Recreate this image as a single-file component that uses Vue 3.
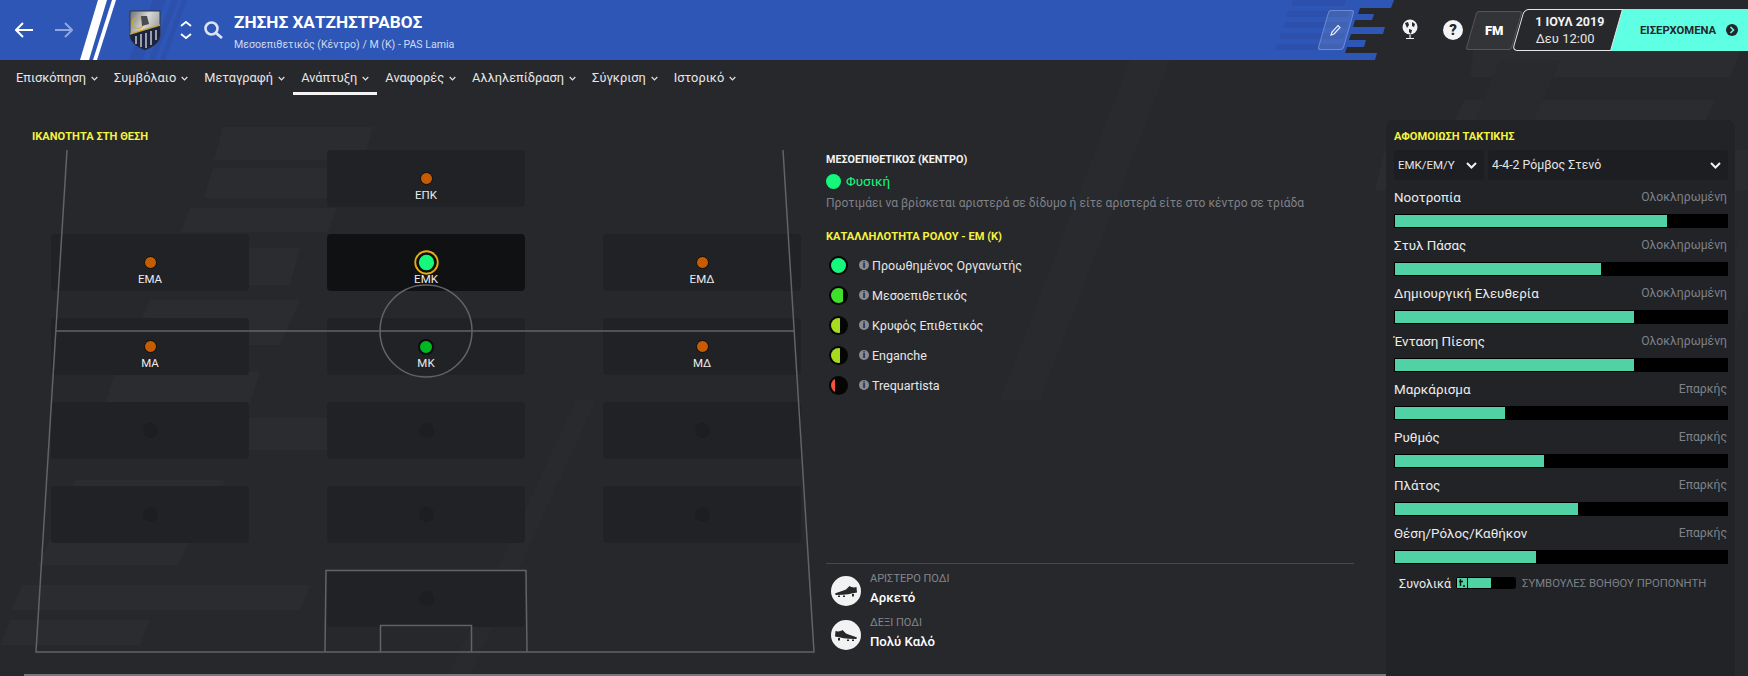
<script setup>
const tabs = ['Επισκόπηση', 'Συμβόλαιο', 'Μεταγραφή', 'Ανάπτυξη', 'Αναφορές', 'Αλληλεπίδραση', 'Σύγκριση', 'Ιστορικό']
const cells = [
  {}, { label: 'ΕΠΚ', kind: 'orange' }, {},
  { label: 'ΕΜΑ', kind: 'orange' }, { label: 'ΕΜΚ', kind: 'active' }, { label: 'ΕΜΔ', kind: 'orange' },
  { label: 'ΜΑ', kind: 'orange' }, { label: 'ΜΚ', kind: 'green' }, { label: 'ΜΔ', kind: 'orange' },
  { kind: 'off' }, { kind: 'off' }, { kind: 'off' },
  { kind: 'off' }, { kind: 'off' }, { kind: 'off' },
  {}, { kind: 'off' }, {},
]
const roles = [
  { name: 'Προωθημένος Οργανωτής', color: '#14f97c', w: 100 },
  { name: 'Μεσοεπιθετικός', color: '#3fe02c', w: 78 },
  { name: 'Κρυφός Επιθετικός', color: '#a6dc1c', w: 60 },
  { name: 'Enganche', color: '#a6dc1c', w: 60 },
  { name: 'Trequartista', color: '#f4513f', w: 24 },
]
const tactics = [
  { name: 'Νοοτροπία', level: 'Ολοκληρωμένη', fill: 272 },
  { name: 'Στυλ Πάσας', level: 'Ολοκληρωμένη', fill: 206 },
  { name: 'Δημιουργική Ελευθερία', level: 'Ολοκληρωμένη', fill: 239 },
  { name: 'Ένταση Πίεσης', level: 'Ολοκληρωμένη', fill: 239 },
  { name: 'Μαρκάρισμα', level: 'Επαρκής', fill: 110 },
  { name: 'Ρυθμός', level: 'Επαρκής', fill: 149 },
  { name: 'Πλάτος', level: 'Επαρκής', fill: 183 },
  { name: 'Θέση/Ρόλος/Καθήκον', level: 'Επαρκής', fill: 141 },
]
const feet = [
  { label: 'ΑΡΙΣΤΕΡΟ ΠΟΔΙ', value: 'Αρκετό', flip: false },
  { label: 'ΔΕΞΙ ΠΟΔΙ', value: 'Πολύ Καλό', flip: true },
]
const streaks = [
  '223,127 373,127 364,160 214,160', '213,168 498,168 489,198 204,198', '190,208 337,208 328,232 181,232',
  '176,248 300,248 290,285 166,285', '150,300 300,300 280,345 130,345', '115,372 260,372 245,420 100,420',
  '100,418 385,418 375,450 90,450', '75,480 225,480 215,505 65,505', '50,540 190,540 178,565 38,565',
  '22,585 310,585 300,610 12,610', '10,620 150,620 140,645 0,645',
  '1475,40 1745,40 1730,77 1470,77', '1465,100 1715,100 1700,130 1450,130', '1385,150 1748,150 1748,190 1375,190',
]
const diagonals = [
  '1000,400 1130,60 1170,60 1040,400', '448,676 576,400 596,400 470,676',
  '1400,300 1500,60 1560,60 1440,340', '1560,676 1740,240 1748,240 1748,300 1600,676',
]
</script>

<template>
  <div class="page">
    <svg class="backdrop" width="1748" height="676" viewBox="0 0 1748 676" aria-hidden="true">
      <polygon v-for="p in streaks" :key="p" :points="p" fill="#2b2c30" />
      <polygon v-for="p in diagonals" :key="p" :points="p" fill="#292a2e" />
    </svg>

    <header class="topbar">
      <svg class="band" width="1748" height="60" viewBox="0 0 1748 60" aria-hidden="true">
        <polygon fill="#2e56b7" points="0,0 1394,0 1391,8 1360,8 1358,14 1374,14 1372,20 1355,20 1353,27 1385,27 1383,34 1351,34 1349,40 1366,40 1364,47 1347,47 1345,53 1377,53 1375,60 0,60" />
        <g fill="#2c50ab">
          <polygon points="1293,0 1346,0 1344,6 1291,6" />
          <polygon points="1288,11 1350,11 1348,17 1286,17" />
          <polygon points="1285,22 1348,22 1346,28 1283,28" />
          <polygon points="1281,33 1345,33 1343,39 1279,39" />
          <polygon points="1277,44 1342,44 1340,50 1275,50" />
          <polygon points="153,0 166,0 142,60 129,60" />
          <polygon points="172,0 178,0 155,60 149,60" />
          <polygon points="182,0 187,0 165,60 160,60" />
        </g>
        <polygon fill="#fff" points="98,0 107,0 89,60 80,60" />
        <polygon fill="#fff" points="112,0 116,0 97,60 93,60" />
      </svg>

      <div class="nav-left">
        <svg class="arrow" width="18" height="16" viewBox="0 0 18 16"><path d="M8 1 1 8l7 7M1 8h17" fill="none" stroke="#fff" stroke-width="2" /></svg>
        <svg class="arrow fwd" width="18" height="16" viewBox="0 0 18 16"><path d="M10 1l7 7-7 7M17 8H0" fill="none" stroke="#8fa6de" stroke-width="2" /></svg>
        <svg class="crest" width="32" height="40" viewBox="0 0 32 40">
          <defs>
            <linearGradient id="silver" x1="0" y1="0" x2="1" y2="0.6"><stop offset="0" stop-color="#6d7076" /><stop offset="0.5" stop-color="#d9d9d6" /><stop offset="1" stop-color="#8f9194" /></linearGradient>
          </defs>
          <path d="M1 1h30v24c0 8-8 12-15 15C9 37 1 33 1 25z" fill="url(#silver)" stroke="#33363d" />
          <path d="M1 24 31 15v10c0 8-8 12-15 15C9 37 1 33 1 25z" fill="#1c2340" />
          <path d="M1 24 31 15" stroke="#c9a63a" stroke-width="1.5" />
          <path d="M7 26v8M12 24v13M17 23v15M22 21v14M27 20v10" stroke="#b8bcc4" stroke-width="1.6" />
          <circle cx="9" cy="13" r="5.5" fill="none" stroke="#d0a93a" stroke-width="1.2" />
          <path d="M12 6h6l2 8-7 2z" fill="#4a4c52" />
        </svg>
        <svg class="updown" width="12" height="20" viewBox="0 0 12 20"><path d="M1 6l5-4 5 4M1 14l5 4 5-4" fill="none" stroke="#fff" stroke-width="1.8" /></svg>
        <svg class="search" width="19" height="18" viewBox="0 0 19 18"><circle cx="7.5" cy="7.5" r="6" fill="#2e56b7" stroke="#dbe3f6" stroke-width="2.6" /><path d="M12 12l6 5" stroke="#dbe3f6" stroke-width="2.8" /></svg>
        <div class="who">
          <div class="name">ΖΗΣΗΣ ΧΑΤΖΗΣΤΡΑΒΟΣ</div>
          <div class="sub">Μεσοεπιθετικός (Κέντρο) / Μ (Κ) - PAS Lamia</div>
        </div>
      </div>

      <div class="nav-right">
        <div class="edit">
          <svg width="12" height="12" viewBox="0 0 12 12"><path d="M1 11l1-3 6-6.500 2 2-6 6.500z" fill="none" stroke="#e8edf8" stroke-width="1.200" /></svg>
        </div>
        <svg class="globe" width="18" height="22" viewBox="0 0 18 22">
          <circle cx="9" cy="8" r="7.500" fill="#f2f2f2" />
          <path d="M4 4l3-1 1 3-2 3zM11 3l3 2-1 3-2-1zM8 10l3 1-1 4-2-2z" fill="#26272b" />
          <path d="M9 16v3M5 19.500h8" stroke="#f2f2f2" stroke-width="1.200" />
        </svg>
        <div class="help">?</div>
        <div class="fm"><span>FM</span></div>
        <div class="date">
          <div class="d1">1 ΙΟΥΛ 2019</div>
          <div class="d2">Δευ 12:00</div>
        </div>
        <div class="next">
          <span>ΕΙΣΕΡΧΟΜΕΝΑ</span>
          <svg width="12" height="12" viewBox="0 0 12 12"><circle cx="6" cy="6" r="6" fill="#24262a" /><path d="M4.500 3l3 3-3 3" fill="none" stroke="#5fffe3" stroke-width="1.600" /></svg>
        </div>
      </div>
    </header>

    <nav class="tabs">
      <div v-for="t in tabs" :key="t" class="tab" :class="{ on: t === 'Ανάπτυξη' }">
        <span>{{ t }}</span>
        <svg width="7" height="5" viewBox="0 0 7 5"><path d="M.700 1l2.800 2.800L6.300 1" fill="none" stroke="#e4e4e4" stroke-width="1.200" /></svg>
      </div>
    </nav>

    <main class="main">
      <section class="left">
        <h3 class="yellow">ΙΚΑΝΟΤΗΤΑ ΣΤΗ ΘΕΣΗ</h3>
        <div class="pitch">
          <div v-for="(c, i) in cells" :key="i" class="cell" :class="{ blank: !c.kind, active: c.kind === 'active' }">
            <template v-if="c.kind">
              <i class="dot" :class="c.kind"></i>
              <b v-if="c.label" class="lbl">{{ c.label }}</b>
            </template>
          </div>
          <svg class="lines" width="800" height="510" viewBox="0 0 800 510" aria-hidden="true">
            <g fill="none" stroke="#626367" stroke-width="1.500">
              <path d="M16 0 -15 502H763L732 0" />
              <path d="M5 181H744" />
              <circle cx="375" cy="181" r="46" />
              <path d="M274 502 275 420.500H475L476 502" />
              <path d="M329.500 502V475.500H420.500V502" />
            </g>
          </svg>
        </div>
      </section>

      <section class="mid">
        <h3 class="white">ΜΕΣΟΕΠΙΘΕΤΙΚΟΣ (ΚΕΝΤΡΟ)</h3>
        <div class="phys"><i></i><span>Φυσική</span></div>
        <p class="note">Προτιμάει να βρίσκεται αριστερά σε δίδυμο ή είτε αριστερά είτε στο κέντρο σε τριάδα</p>
        <h3 class="yellow role-h">ΚΑΤΑΛΛΗΛΟΤΗΤΑ ΡΟΛΟΥ - ΕΜ (Κ)</h3>
        <ul class="roles">
          <li v-for="r in roles" :key="r.name">
            <span class="meter"><span class="meter-in"><span :style="{ width: r.w + '%', background: r.color }"></span></span></span>
            <span class="info">i</span>
            <span>{{ r.name }}</span>
          </li>
        </ul>
        <div class="feet">
          <div v-for="f in feet" :key="f.label" class="foot">
            <span class="boot">
              <svg :class="{ flip: f.flip }" width="22" height="12" viewBox="0 0 22 12">
                <path d="M0 8.500C3 7 8 6 11 4.500L14.500 1c1 .5 2.500 1.500 4.500 1.500L21.500 2 22 7.500c-5 1-12 2.500-20 2.500C1 10 0 9.500 0 8.500z" fill="#26272b" />
                <path d="M3 10.500h2v1.500H3zM8 10.500h2v1.500H8zM17 9h2v2.500h-2z" fill="#26272b" />
              </svg>
            </span>
            <div class="foot-text">
              <div class="foot-l">{{ f.label }}</div>
              <div class="foot-v">{{ f.value }}</div>
            </div>
          </div>
        </div>
      </section>

      <aside class="panel">
        <h3 class="yellow">ΑΦΟΜΟΙΩΣΗ ΤΑΚΤΙΚΗΣ</h3>
        <div class="selects">
          <div class="sel s1"><span>ΕΜΚ/ΕΜ/Υ</span><svg width="11" height="7" viewBox="0 0 11 7"><path d="M1 1l4.500 4.500L10 1" fill="none" stroke="#f2f2f2" stroke-width="2" /></svg></div>
          <div class="sel s2"><span>4-4-2 Ρόμβος Στενό</span><svg width="11" height="7" viewBox="0 0 11 7"><path d="M1 1l4.500 4.500L10 1" fill="none" stroke="#f2f2f2" stroke-width="2" /></svg></div>
        </div>
        <div v-for="t in tactics" :key="t.name" class="tac">
          <div class="tac-top"><span>{{ t.name }}</span><em>{{ t.level }}</em></div>
          <div class="bar"><div class="bar-fill" :style="{ width: t.fill + 'px' }"></div></div>
        </div>
        <div class="overall">
          <span class="ov-l">Συνολικά</span>
          <div class="ov-bar">
            <svg width="10" height="10" viewBox="0 0 10 10"><rect width="10" height="10" fill="#50d2a4" /><path d="M3.500 1v7M2 3.500h4M6 8h2" stroke="#111" stroke-width="1.400" /></svg>
            <div class="ov-fill"></div>
          </div>
          <span class="ov-t">ΣΥΜΒΟΥΛΕΣ ΒΟΗΘΟΥ ΠΡΟΠΟΝΗΤΗ</span>
        </div>
      </aside>
    </main>
    <div class="baseline"></div>
  </div>
</template>

<style>
html, body { margin: 0; background: #27282c; overflow: hidden; }
</style>

<style scoped>
.page { position: relative; width: 1748px; height: 676px; overflow: hidden; background: #27282c; color: #e6e6e6; font-family: Roboto, "Noto Sans", sans-serif; font-size: 14px; }
.backdrop { position: absolute; left: 0; top: 0; }
h3 { margin: 0; font-size: 11.100px; line-height: 14px; font-weight: 700; }
.yellow { color: #f4f33f; }
.white { color: #f2f2f2; font-size: 10.800px; }

.topbar { position: relative; height: 60px; display: flex; justify-content: space-between; }
.band { position: absolute; left: 0; top: 0; }
.nav-left, .nav-right { position: relative; display: flex; align-items: center; }
.nav-left { padding-left: 15px; }
.arrow { display: block; }
.fwd { margin-left: 22px; }
.crest { margin-left: 56px; }
.updown { margin-left: 19px; }
.search { margin-left: 12px; }
.who { margin-left: 11px; padding-top: 4px; }
.name { font-size: 17.200px; line-height: 20px; font-weight: 700; color: #fff; white-space: nowrap; }
.sub { font-size: 10.600px; line-height: 16px; margin-top: 5px; color: #cfd9f2; white-space: nowrap; }

.nav-right { width: 431px; }
.edit { width: 24px; height: 38px; border: 1px solid #6e8bd0; border-radius: 3px; background: rgba(255, 255, 255, .1); transform: skewX(-16deg); display: flex; align-items: center; justify-content: center; margin-left: 6px; }
.edit svg { transform: skewX(16deg); }
.globe { margin-left: 52px; }
.help { width: 20px; height: 20px; margin-left: 24px; border-radius: 50%; background: #f4f4f4; color: #26272b; font-size: 15px; line-height: 20px; text-align: center; font-weight: 900; }
.fm { width: 44px; height: 37px; margin-left: 8px; border: 1px solid #55565a; border-radius: 3px; background: #333437; transform: skewX(-16deg); display: flex; align-items: center; justify-content: center; }
.fm span { transform: skewX(16deg); font-size: 13px; font-weight: 900; color: #fff; }
.date { position: relative; z-index: 1; width: 97px; height: 40px; margin-left: 1px; border: 1px solid #e6e6e6; border-radius: 5px 0 0 5px; background: #27282c; transform: skewX(-16deg); text-align: center; }
.d1, .d2 { transform: skewX(16deg); }
.d1 { font-size: 12.500px; line-height: 16px; margin-top: 4px; font-weight: 700; color: #f2f2f2; }
.d2 { font-size: 13px; line-height: 17px; color: #e6e6e6; }
.next { position: absolute; right: 0; top: 9px; width: 138px; height: 42px; background: #5fffe3; color: #24262a; display: flex; align-items: center; padding-left: 30px; gap: 10px; box-sizing: border-box; font-size: 11.300px; font-weight: 700; }

.tabs { position: relative; height: 35px; display: flex; padding-left: 8px; }
.tab { position: relative; display: flex; align-items: flex-start; gap: 5px; padding: 9px 8px 0; font-size: 12.800px; line-height: 17px; color: #e6e6e6; white-space: nowrap; }
.tab svg { margin-top: 7px; }
.tab.on::after { content: ""; position: absolute; left: 0; right: 0; bottom: 0; height: 3px; background: #f4f4f4; }

.main { position: relative; display: flex; height: 581px; }
.left { width: 826px; box-sizing: border-box; padding: 35px 0 0 32px; }
.pitch { position: relative; display: grid; grid-template-columns: repeat(3, 198px); grid-auto-rows: 57px; column-gap: 78px; row-gap: 27px; margin: 6px 0 0 19px; width: 750px; }
.cell { position: relative; border-radius: 4px; background: #212226; display: flex; align-items: center; justify-content: center; }
.cell.blank { background: none; }
.cell.active { background: #101113; }
.lbl { position: absolute; top: 37px; left: 0; right: 0; text-align: center; font-size: 11.500px; line-height: 16px; font-weight: 400; color: #ececec; }
.dot { display: block; border-radius: 50%; box-sizing: border-box; }
.dot.orange { width: 13px; height: 13px; background: #c65b00; border: 1px solid #0d0d0d; }
.dot.off { width: 15px; height: 15px; background: #1d1e21; }
.dot.green { width: 16px; height: 16px; background: #00b824; border: 2px solid #0d0d0d; }
.dot.active { width: 23px; height: 23px; background: #14f97c; border: 3px solid #0d0d0d; box-shadow: 0 0 0 2px #e8ae0c; transform: scale(.9); }
.lines { position: absolute; left: 0; top: 0; overflow: visible; pointer-events: none; }

.mid { width: 528px; padding-top: 58px; display: flex; flex-direction: column; }
.phys { display: flex; align-items: center; gap: 5px; margin-top: 3px; height: 22px; color: #14f97c; font-size: 13.500px; }
.phys i { width: 15px; height: 15px; border-radius: 50%; background: #14f97c; }
.note { margin: 2px 0 0; color: #7f8188; font-size: 12.050px; line-height: 18px; white-space: nowrap; }
.role-h { margin-top: 18px; }
.roles { list-style: none; margin: 6px 0 0 3px; padding: 0; }
.roles li { display: flex; align-items: center; height: 30px; font-size: 12.500px; color: #e6e6e6; white-space: nowrap; }
.meter { width: 19px; height: 19px; border-radius: 50%; background: #050505; display: flex; align-items: center; justify-content: center; flex: none; }
.meter-in { width: 15px; height: 15px; border-radius: 50%; overflow: hidden; display: block; }
.meter-in span { display: block; height: 100%; }
.info { width: 10px; height: 10px; margin: 0 3px 0 11px; border-radius: 50%; background: #8b8c90; color: #27282c; font-size: 9px; line-height: 10px; font-weight: 900; text-align: center; flex: none; }
.feet { margin-top: auto; margin-bottom: 19px; border-top: 1px solid #47484c; padding-top: 5px; }
.foot { display: flex; align-items: center; gap: 9px; height: 44px; padding-left: 5px; }
.foot-text { margin-top: -6px; }
.boot { width: 30px; height: 30px; border-radius: 50%; background: #f2f2f2; display: flex; align-items: center; justify-content: center; flex: none; }
.flip { transform: scaleX(-1); }
.foot-l { font-size: 11px; line-height: 15px; color: #84868c; }
.foot-v { margin-top: 3px; font-size: 13.200px; line-height: 17px; font-weight: 500; color: #fff; }

.panel { position: absolute; left: 1386px; top: 25px; width: 349px; height: 556px; box-sizing: border-box; padding: 10px 7px 0 8px; border-radius: 8px 8px 0 0; background: #212327; }
.selects { display: flex; gap: 4px; margin-top: 6px; }
.sel { height: 30px; box-sizing: border-box; border-radius: 4px; background: #1c1e21; display: flex; align-items: center; justify-content: space-between; padding: 0 7px 0 4px; font-size: 12.300px; color: #e6e6e6; }
.s1 { width: 90px; font-size: 11.500px; }
.s2 { width: 240px; }
.tac-top { display: flex; justify-content: space-between; height: 34px; box-sizing: border-box; padding-top: 9px; font-size: 13.400px; line-height: 17px; color: #ececec; }
.tac-top em { font-style: normal; font-size: 12.200px; color: #7f8188; margin-right: 1px; }
.bar { height: 14px; width: 334px; background: #000; box-sizing: border-box; padding: 1px; }
.bar-fill { height: 12px; background: #50d2a4; }
.overall { display: flex; align-items: center; height: 16px; margin: 11px 0 0 5px; }
.ov-l { font-size: 12.500px; color: #ececec; width: 57px; }
.ov-bar { width: 60px; height: 12px; border-radius: 3px; background: #000; display: flex; align-items: center; padding-left: 1px; box-sizing: border-box; gap: 1px; }
.ov-fill { width: 23px; height: 10px; background: #50d2a4; }
.ov-t { margin-left: 6px; font-size: 11.300px; color: #7f8188; white-space: nowrap; }
.baseline { position: absolute; left: 24px; width: 1362px; bottom: 0; height: 2px; background: #76777b; }
</style>
